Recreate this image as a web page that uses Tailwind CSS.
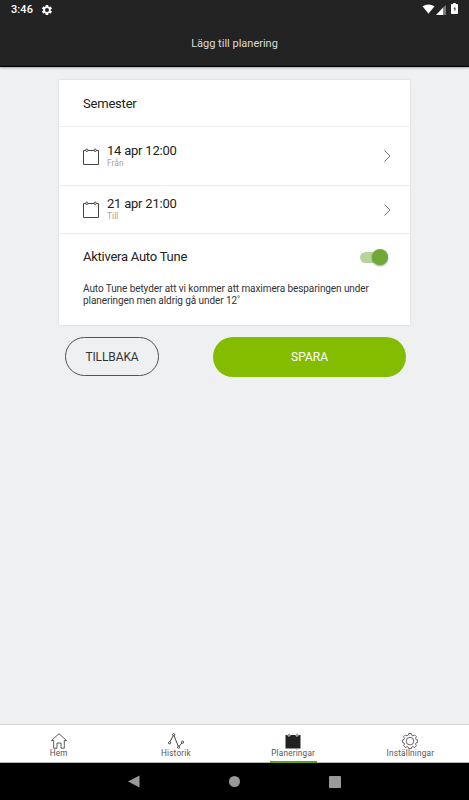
<!DOCTYPE html>
<html lang="sv">
<head>
    <meta charset="UTF-8">
    <meta name="viewport" content="width=device-width, initial-scale=1.0">
    <title>Lägg till planering</title>
    <script src="https://cdn.jsdelivr.net/npm/@tailwindcss/browser@4"></script>
</head>
<body class="flex h-screen flex-col overflow-hidden bg-[#eff0f2] font-['Roboto',sans-serif] text-[#222]">
    <!-- Header -->
    <header class="h-[67px] shrink-0 border-b border-black bg-[#232323] text-white shadow-[0_1px_2px_rgba(0,0,0,0.3)]">
        <div class="flex h-5 items-center pl-[11px] pr-[11px]">
            <span class="text-[11px] leading-5 font-medium tracking-[0.1px]">3:46</span>
            <svg class="mt-[-1px] ml-[8px] size-3" viewBox="0 0 24 24" fill="#fff"><path fill-rule="evenodd" d="M19.4 13a7.500 7.500 0 0 0 0-2l2.100-1.700a.5.5 0 0 0 .1-.6l-2-3.500a.5.5 0 0 0-.6-.2l-2.500 1a7.300 7.300 0 0 0-1.700-1l-.4-2.600a.5.5 0 0 0-.5-.4h-4a.5.5 0 0 0-.5.4L9 5a7.700 7.700 0 0 0-1.700 1l-2.500-1a.5.5 0 0 0-.6.2l-2 3.500a.5.5 0 0 0 .1.600L4.500 11a7.900 7.900 0 0 0 0 2l-2.200 1.700a.5.5 0 0 0-.1.600l2 3.500c.1.200.4.300.6.200l2.500-1a7.300 7.300 0 0 0 1.700 1l.4 2.600c0 .2.200.4.500.4h4c.3 0 .5-.2.500-.4l.4-2.600a7.700 7.700 0 0 0 1.700-1l2.500 1c.2.100.5 0 .6-.2l2-3.500a.5.5 0 0 0-.1-.6zM12 16a4 4 0 1 1 0-8 4 4 0 0 1 0 8z"/></svg>
            <svg class="mt-[-2px] ml-auto h-[10px] w-[13px]" viewBox="0 0 13 10" fill="#fff"><path d="M.5 2.200Q6.500-1.200 12.500 2.200L6.500 9.800z"/></svg>
            <svg class="mt-[-1px] ml-[1px] h-[10px] w-[10px]" viewBox="0 0 10 10"><path fill="#fff" d="M0 10 7.500 2v8z"/><path fill="#777" d="M7.500 2 10 0v10H7.500z"/></svg>
            <svg class="mt-[-3px] ml-[5px] h-[11px] w-[7px]" viewBox="0 0 7 11"><path fill="#fff" d="M2.200 0h2.600v1H6.200q.8 0 .8.800v8.400q0 .8-.8.800H.8q-.8 0-.8-.8V1.800Q0 1 .8 1h1.400z"/><path fill="#444" d="M4.300 3 2.400 6.300h1.100v2.700l1.600-3.500H4z"/></svg>
        </div>
        <h1 class="mt-[15px] text-center text-[11px] leading-[17px] text-[#dcdcdc]">Lägg till planering</h1>
    </header>

    <main class="flex-1 pl-[59px] pt-[13px]">
        <!-- Planning card -->
        <section class="h-[245px] w-[351px] bg-white shadow-[0_0_2px_rgba(0,0,0,0.14)]">
            <div class="h-[47px] border-b border-[#f0f0f0] pl-6 text-[13px] leading-[47px] tracking-[-0.2px]">Semester</div>

            <div class="flex h-[59px] items-center border-b border-[#ececec] pr-[19px] pl-6">
                <svg class="h-[17px] w-4" viewBox="0 0 16 17" fill="none" stroke="#444"><path d="M2.500 2.500H.5v14h15v-14h-2M5 2.500h6"/><circle cx="3.800" cy="2.300" r="1.200"/><circle cx="12.200" cy="2.300" r="1.200"/></svg>
                <div class="mt-[-2px] ml-2">
                    <p class="text-[13px] leading-4 tracking-[-0.22px]">14 apr 12:00</p>
                    <p class="text-[8.500px] leading-[9px] text-[#a5a5a5]">Från</p>
                </div>
                <svg class="ml-auto h-3 w-[7px]" viewBox="0 0 7 12" fill="none" stroke="#555" stroke-width=".8"><path d="m.5.5 5.500 5.500-5.500 5.500"/></svg>
            </div>

            <div class="flex h-12 items-center border-b border-[#ececec] pr-[19px] pl-6">
                <svg class="h-[17px] w-4" viewBox="0 0 16 17" fill="none" stroke="#444"><path d="M2.500 2.500H.5v14h15v-14h-2M5 2.500h6"/><circle cx="3.800" cy="2.300" r="1.200"/><circle cx="12.200" cy="2.300" r="1.200"/></svg>
                <div class="mt-[-2px] ml-2">
                    <p class="text-[13px] leading-4 tracking-[-0.22px]">21 apr 21:00</p>
                    <p class="text-[8.500px] leading-[9px] text-[#a5a5a5]">Till</p>
                </div>
                <svg class="ml-auto h-3 w-[7px]" viewBox="0 0 7 12" fill="none" stroke="#555" stroke-width=".8"><path d="m.5.5 5.500 5.500-5.500 5.500"/></svg>
            </div>

            <div class="flex h-[46px] items-center justify-between pr-[22px] pl-6">
                <span class="text-[13px] tracking-[-0.25px]">Aktivera Auto Tune</span>
                <div class="flex h-[11px] w-7 items-center justify-end rounded-full bg-[#b5d699]">
                    <div class="size-4 shrink-0 rounded-full bg-[#6eaa34] shadow-[0_1px_2px_rgba(0,0,0,0.4)]"></div>
                </div>
            </div>
            <p class="pt-[3px] pl-6 text-[10px] leading-[12px] tracking-[-0.08px] whitespace-nowrap text-[#333]">Auto Tune betyder att vi kommer att maximera besparingen under<br>planeringen men aldrig gå under 12˚</p>
        </section>

        <div class="mt-3 flex w-[348px] justify-between pr-px pl-[6px]">
            <button class="h-[39px] w-[94px] rounded-full border border-[#555] text-[12px] tracking-[-0.1px] text-[#333]">TILLBAKA</button>
            <button class="h-10 w-[193px] rounded-full bg-[#84bd00] pb-px text-[12px] text-white">SPARA</button>
        </div>
    </main>

    <!-- Tab bar -->
    <nav class="grid h-[39px] shrink-0 grid-cols-4 border-t border-[#d4d6d6] border-b border-b-[#b5b9b5] bg-white text-[8.200px] tracking-[0.2px] text-[#555]">
        <div class="flex flex-col items-center pt-[8px]">
            <svg class="size-4" viewBox="0 0 16 16" fill="none" stroke="#333" stroke-width=".8"><path d="M.5 7.500 8 .7l7.500 6.800h-2.200v7.700H10V10H6v5.200H2.700V7.500z"/></svg>
            <span class="leading-[9px]">Hem</span>
        </div>
        <div class="flex flex-col items-center pt-[8px]">
            <svg class="size-4" viewBox="0 0 16 16" fill="none" stroke="#333" stroke-width=".9"><path d="M2 8.800 5.200 2.700M6.100 2.800l4.100 10.300M11.200 13.200 13.900 10"/><circle cx="1.500" cy="9.800" r="1.100"/><circle cx="5.700" cy="1.700" r="1.100"/><circle cx="10.600" cy="14.200" r="1.100"/><circle cx="14.600" cy="9.200" r="1.100"/></svg>
            <span class="leading-[9px]">Historik</span>
        </div>
        <div class="flex flex-col items-center pt-[8px]">
            <svg class="size-4" viewBox="0 0 16 16"><path fill="#222" d="M.5 2h15v13.500H.5z"/><g fill="#777" stroke="#ddd" stroke-width=".7"><circle cx="4" cy="2" r="1.300"/><circle cx="12" cy="2" r="1.300"/></g></svg>
            <span class="leading-[9px]">Planeringar</span>
            <div class="mt-[3px] h-[2px] w-[47px] bg-[#65a400]"></div>
        </div>
        <div class="flex flex-col items-center pt-[8px]">
            <svg class="size-4" viewBox="0 0 16 16" fill="none" stroke="#444" stroke-width=".8"><path stroke-linejoin="round" d="M6.700.5h2.600l.5 1.800 1.100.5 1.700-.9 1.800 1.800-.9 1.700.5 1.100 1.600.5v2.400l-1.600.5-.5 1.100.9 1.700-1.800 1.800-1.700-.9-1.100.5-.5 1.400H6.700l-.5-1.400-1.100-.5-1.700.9-1.800-1.800.9-1.700L2 9.900.4 9.400V7L2 6.500l.5-1.100-.9-1.700 1.800-1.800 1.700.9 1.100-.5z"/><circle cx="8" cy="8.100" r="3.800"/></svg>
            <span class="leading-[9px]">Inställningar</span>
        </div>
    </nav>

    <!-- Android navigation -->
    <div class="flex h-[37px] shrink-0 items-center bg-black pl-[128px]">
        <svg class="h-[13px] w-3" viewBox="0 0 12 13" fill="#999"><path d="M11.500.5v12L0 6.500z"/></svg>
        <div class="ml-[89px] size-[11px] rounded-full bg-[#999]"></div>
        <div class="ml-[89px] size-3 rounded-[1px] bg-[#999]"></div>
    </div>
</body>
</html>
